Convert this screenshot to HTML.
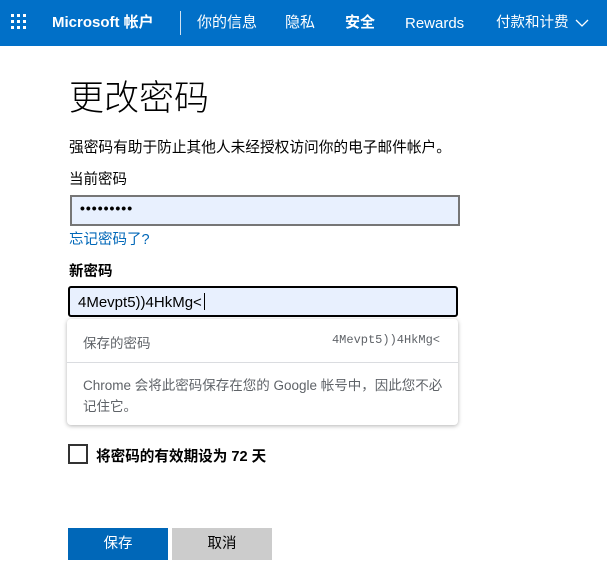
<!DOCTYPE html>
<html><head><meta charset="utf-8"><style>
*{margin:0;padding:0;box-sizing:border-box}
body{width:607px;height:587px;overflow:hidden;background:#fff;font-family:"Liberation Sans","Noto Sans CJK SC",sans-serif;color:#000;position:relative}
.hd{position:absolute;left:0;top:0;width:607px;height:46px;background:#0170c8;color:#fff;font-size:15px}
.hd span{position:absolute;top:13px;white-space:nowrap;line-height:20px}
.a{position:absolute;white-space:nowrap}
</style></head><body>
<div class="hd">
<svg style="position:absolute;left:11px;top:14px" width="18" height="18"><g fill="#fff">
<rect x="0" y="0" width="3" height="3"/><rect x="6" y="0" width="3" height="3"/><rect x="12" y="0" width="3" height="3"/>
<rect x="0" y="6" width="3" height="3"/><rect x="6" y="6" width="3" height="3"/><rect x="12" y="6" width="3" height="3"/>
<rect x="0" y="12" width="3" height="3"/><rect x="6" y="12" width="3" height="3"/><rect x="12" y="12" width="3" height="3"/></g></svg>
<span style="left:52px;font-weight:bold">Microsoft 帐户</span>
<div style="position:absolute;left:180px;top:11px;width:1px;height:24px;background:#cfe2f3"></div>
<span style="left:197px">你的信息</span>
<span style="left:285px">隐私</span>
<span style="left:345px;font-weight:bold">安全</span>
<span style="left:405px;top:16px;line-height:15px">Rewards</span>
<span style="left:496px;font-size:14.5px">付款和计费</span>
<svg style="position:absolute;left:575px;top:19px" width="14" height="9"><path d="M1 1l6 6 6-6" stroke="#fff" stroke-width="1.3" fill="none"/></svg>
</div>
<div class="a" style="left:69px;top:70px;font-size:35px;font-weight:300">更改密码</div>
<div class="a" style="left:69px;top:136px;font-size:14.7px">强密码有助于防止其他人未经授权访问你的电子邮件帐户。</div>
<div class="a" style="left:69px;top:168px;font-size:14.5px">当前密码</div>
<div class="a" style="left:70px;top:195px;width:390px;height:31px;background:#e8f0fe;border:2px solid #767676"></div>
<div class="a" style="left:80px;top:200px;font-size:14px;letter-spacing:1px;font-weight:bold">•••••••••</div>
<div class="a" style="left:69px;top:228px;font-size:14.5px;color:#0067b8">忘记密码了?</div>
<div class="a" style="left:69px;top:260px;font-size:14.5px;font-weight:bold">新密码</div>
<div class="a" style="left:68px;top:286px;width:390px;height:31px;background:#e8f0fe;border:2px solid #000;border-radius:3px"></div>
<div class="a" style="left:78px;top:293px;font-size:15px">4Mevpt5))4HkMg&lt;<span style="display:inline-block;width:1px;height:17px;background:#000;vertical-align:-3px;margin-left:2px"></span></div>
<div class="a" style="left:67px;top:319px;width:391px;height:106px;background:#fff;border-radius:4px;box-shadow:0 1px 4px rgba(0,0,0,.3)"></div>
<div class="a" style="left:83px;top:332px;font-size:13.5px;color:#5f6368">保存的密码</div>
<div class="a" style="right:167px;top:333px;font-size:12px;color:#5f6368;font-family:'Liberation Mono','DejaVu Sans Mono',monospace">4Mevpt5))4HkMg&lt;</div>
<div class="a" style="left:67px;top:362px;width:391px;height:1px;background:#dadce0"></div>
<div class="a" style="left:83px;top:375px;font-size:13.5px;color:#5f6368;line-height:21px">Chrome 会将此密码保存在您的 Google 帐号中，因此您不必<br>记住它。</div>
<div class="a" style="left:68px;top:444px;width:20px;height:20px;border:2px solid #333;background:#fff"></div>
<div class="a" style="left:96px;top:445px;font-size:14.6px;font-weight:bold">将密码的有效期设为 72 天</div>
<div class="a" style="left:68px;top:528px;width:100px;height:32px;background:#0067b8;color:#fff;font-size:14.5px;text-align:center;line-height:32px">保存</div>
<div class="a" style="left:172px;top:528px;width:100px;height:32px;background:#ccc;color:#000;font-size:14.5px;text-align:center;line-height:32px">取消</div>
</body></html>
